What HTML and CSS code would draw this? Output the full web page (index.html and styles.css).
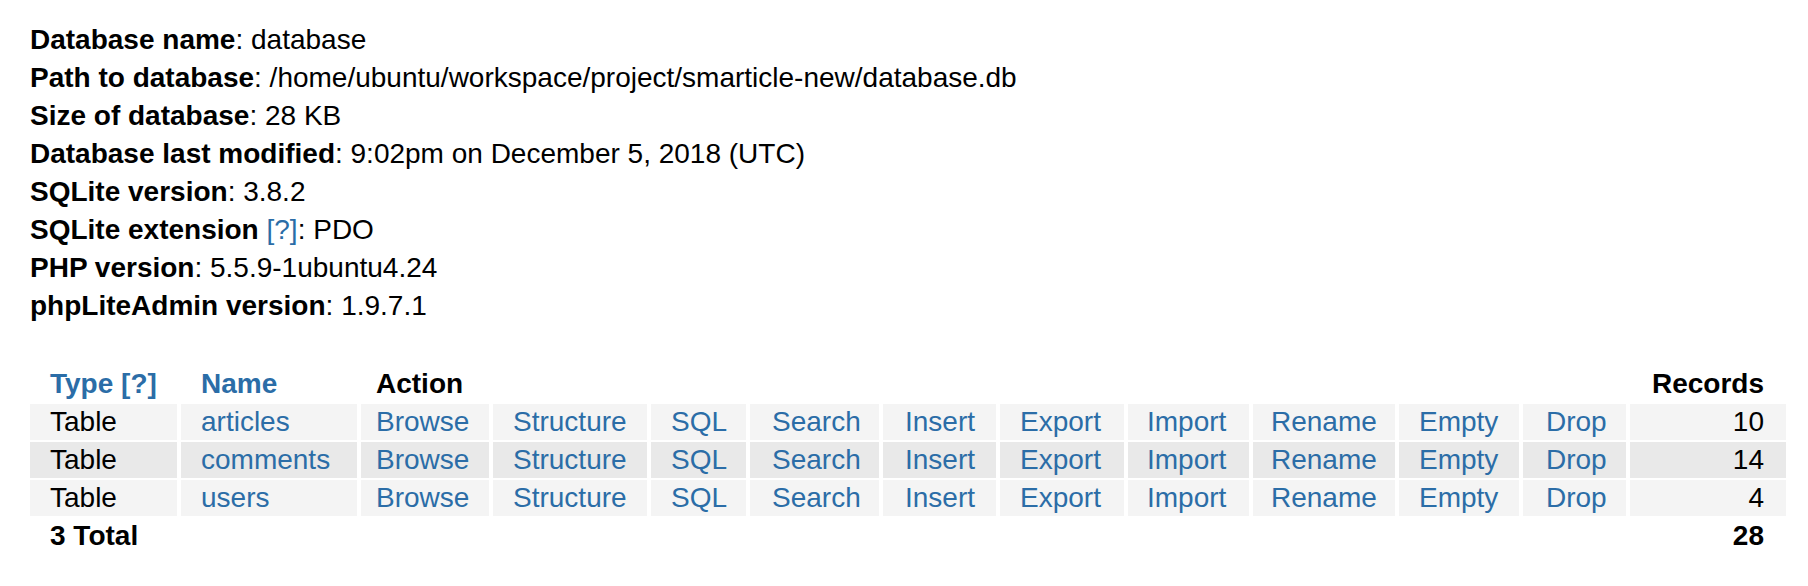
FILE: index.html
```html
<!DOCTYPE html>
<html>
<head>
<meta charset="utf-8">
<link rel="stylesheet" href="styles.css">
</head>
<body>
<div class="page">
  <div class="info">
    <div><b>Database name</b>: database</div>
    <div><b>Path to database</b>: /home/ubuntu/workspace/project/smarticle-new/database.db</div>
    <div><b>Size of database</b>: 28 KB</div>
    <div><b>Database last modified</b>: 9:02pm on December 5, 2018 (UTC)</div>
    <div><b>SQLite version</b>: 3.8.2</div>
    <div><b>SQLite extension</b> <a href="#">[?]</a>: PDO</div>
    <div><b>PHP version</b>: 5.5.9-1ubuntu4.24</div>
    <div><b>phpLiteAdmin version</b>: 1.9.7.1</div>
  </div>
  <table class="view">
    <colgroup>
      <col class="c-type"><col class="c-name"><col class="c-browse"><col class="c-structure"><col class="c-sql"><col class="c-search"><col class="c-insert"><col class="c-export"><col class="c-import"><col class="c-rename"><col class="c-empty"><col class="c-drop"><col class="c-records">
    </colgroup>
    <thead>
      <tr>
        <th><a href="#">Type [?]</a></th>
        <th><a href="#">Name</a></th>
        <th colspan="10" class="p-browse">Action</th>
        <th class="num">Records</th>
      </tr>
    </thead>
    <tbody>
      <tr class="odd">
        <td>Table</td><td><a href="#">articles</a></td>
        <td class="p-browse"><a href="#">Browse</a></td><td><a href="#">Structure</a></td><td><a href="#">SQL</a></td><td class="p-search"><a href="#">Search</a></td><td class="p-insert"><a href="#">Insert</a></td><td><a href="#">Export</a></td><td class="p-import"><a href="#">Import</a></td><td class="p-rename"><a href="#">Rename</a></td><td><a href="#">Empty</a></td><td class="p-drop"><a href="#">Drop</a></td>
        <td class="num">10</td>
      </tr>
      <tr class="even">
        <td>Table</td><td><a href="#">comments</a></td>
        <td class="p-browse"><a href="#">Browse</a></td><td><a href="#">Structure</a></td><td><a href="#">SQL</a></td><td class="p-search"><a href="#">Search</a></td><td class="p-insert"><a href="#">Insert</a></td><td><a href="#">Export</a></td><td class="p-import"><a href="#">Import</a></td><td class="p-rename"><a href="#">Rename</a></td><td><a href="#">Empty</a></td><td class="p-drop"><a href="#">Drop</a></td>
        <td class="num">14</td>
      </tr>
      <tr class="odd">
        <td>Table</td><td><a href="#">users</a></td>
        <td class="p-browse"><a href="#">Browse</a></td><td><a href="#">Structure</a></td><td><a href="#">SQL</a></td><td class="p-search"><a href="#">Search</a></td><td class="p-insert"><a href="#">Insert</a></td><td><a href="#">Export</a></td><td class="p-import"><a href="#">Import</a></td><td class="p-rename"><a href="#">Rename</a></td><td><a href="#">Empty</a></td><td class="p-drop"><a href="#">Drop</a></td>
        <td class="num">4</td>
      </tr>
    </tbody>
    <tfoot>
      <tr>
        <th colspan="12">3 Total</th>
        <th class="num">28</th>
      </tr>
    </tfoot>
  </table>
</div>
</body>
</html>
```

FILE: styles.css
```css
html, body {
  margin: 0;
  padding: 0;
  background: #ffffff;
}
body {
  font-family: "Liberation Sans", Arial, Helvetica, sans-serif;
  font-size: 28px;
  color: #000000;
}
a {
  color: #2b6da7;
  text-decoration: none;
}
.page {
  padding: 21px 0 0 30px;
}
.info {
  line-height: 38px;
}
.info b {
  font-weight: bold;
}
.view {
  margin-top: 39px;
  margin-left: -4px;
  border-collapse: separate;
  border-spacing: 4px 2px;
  table-layout: fixed;
  width: 1764px;
}
.view th,
.view td {
  padding: 2px 0 2px 20px;
  line-height: 32px;
  text-align: left;
  white-space: nowrap;
  overflow: hidden;
}
.view th {
  font-weight: bold;
}
.view .p-browse { padding-left: 15px; }
.view .p-search { padding-left: 22px; }
.view .p-insert { padding-left: 22px; }
.view .p-import { padding-left: 19px; }
.view .p-rename { padding-left: 18px; }
.view .p-drop { padding-left: 23px; }
.view .num {
  text-align: right;
  padding: 2px 22px 2px 0;
}
.view tr.odd td {
  background: #f4f4f4;
}
.view tr.even td {
  background: #e9e9e9;
}
.c-type { width: 147px; }
.c-name { width: 176px; }
.c-browse { width: 128px; }
.c-structure { width: 154px; }
.c-sql { width: 95px; }
.c-search { width: 129px; }
.c-insert { width: 113px; }
.c-export { width: 124px; }
.c-import { width: 121px; }
.c-rename { width: 142px; }
.c-empty { width: 120px; }
.c-drop { width: 103px; }
.c-records { width: 156px; }
```
